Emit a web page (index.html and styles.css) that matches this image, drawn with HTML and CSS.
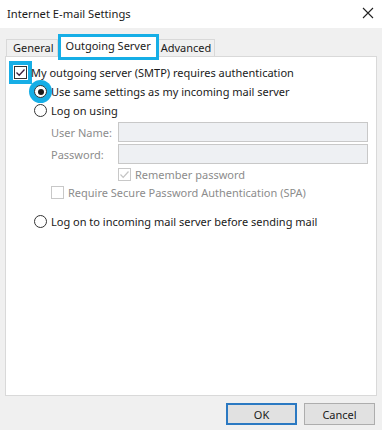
FILE: index.html
```html
<!DOCTYPE html>
<html lang="en">
<head>
    <meta charset="UTF-8">
    <title>Internet E-mail Settings</title>
    <link rel="stylesheet" href="styles.css">
</head>
<body>

<div class="window">
    <div class="titlebar">
        <span class="title">Internet E-mail Settings</span>
        <svg class="close" width="12" height="12" viewBox="0 0 12 12">
            <path d="M1 1 L11 11 M11 1 L1 11" stroke="#222" stroke-width="1.1" fill="none"/>
        </svg>
    </div>

    <div class="content">
        <div class="tabs">
            <div class="tab">General</div>
            <div class="tab selected">Outgoing Server</div>
            <div class="tab">Advanced</div>
        </div>

        <div class="panel">
            <div class="row">
                <span class="check checked focus">
                    <svg width="11" height="11" viewBox="0 0 11 11"><path d="M1.5 5.5 L4.2 8.3 L9.5 2.5" stroke="#3b1f3b" stroke-width="1.3" fill="none"/></svg>
                </span>
                <span>My outgoing server (SMTP) requires authentication</span>
            </div>
            <div class="row indent">
                <span class="radio checked focus"></span>
                <span>Use same settings as my incoming mail server</span>
            </div>
            <div class="row indent">
                <span class="radio"></span>
                <span>Log on using</span>
            </div>

            <div class="field">
                <label>User Name:</label>
                <div class="input"></div>
            </div>
            <div class="field">
                <label>Password:</label>
                <div class="input"></div>
            </div>

            <div class="row sub remember disabled">
                <span class="check">
                    <svg width="11" height="11" viewBox="0 0 11 11"><path d="M1.5 5.5 L4.2 8.3 L9.5 2.5" stroke="#c4c4c4" stroke-width="1.2" fill="none"/></svg>
                </span>
                <span>Remember password</span>
            </div>
            <div class="row sub spa disabled">
                <span class="check"></span>
                <span>Require Secure Password Authentication (SPA)</span>
            </div>

            <div class="row indent last">
                <span class="radio"></span>
                <span>Log on to incoming mail server before sending mail</span>
            </div>
        </div>

        <div class="footer">
            <button class="btn default">OK</button>
            <button class="btn">Cancel</button>
        </div>
    </div>
</div>

</body>
</html>
```

FILE: styles.css
```css
body {
    margin: 0;
    font-family: "Noto Sans", "Open Sans", sans-serif;
    font-size: 11px;
    color: #1a1a1a;
    background-color: #f0f0f0;
}

.window {
    width: 382px;
    height: 430px;
    display: flex;
    flex-direction: column;
}

.titlebar {
    height: 28px;
    background-color: white;
    display: flex;
    align-items: center;
    justify-content: space-between;
    padding: 0 7px 2px 7px;
    box-sizing: border-box;
}

.title {
    font-size: 11.2px;
}

.close {
    margin-right: 1px;
}

.content {
    flex-grow: 1;
    display: flex;
    flex-direction: column;
    padding: 0 5px;
}

.tabs {
    display: flex;
    align-items: flex-end;
    height: 28px;
    padding-left: 1px;
}

.tab {
    height: 16px;
    line-height: 16px;
    padding: 0 3px 0 6px;
    border: 1px solid #d9d9d9;
    border-bottom: none;
    background-color: #f0f0f0;
}

.tab.selected {
    height: 20px;
    line-height: 18px;
    padding: 0 5px;
    margin: 0 3px -1px 3px;
    background-color: white;
    border: none;
    outline: 3px solid #16aee6;
    position: relative;
    z-index: 1;
}

.tab.selected + .tab {
    border-left: none;
    padding-left: 2px;
    padding-right: 3px;
}

.panel {
    height: 340px;
    box-sizing: border-box;
    background-color: white;
    border: 1px solid #d9d9d9;
    padding: 6px 0 0 9px;
}

.row {
    height: 19px;
    display: flex;
    align-items: center;
    gap: 4px;
}

.row.indent {
    padding-left: 19px;
}

.check {
    width: 11px;
    height: 11px;
    border: 1px solid #333;
    background-color: white;
    display: flex;
    align-items: center;
    justify-content: center;
    flex-shrink: 0;
}

.check.focus {
    box-shadow: 0 0 0 1px white, 0 0 0 5px #16aee6;
    margin-left: -1px;
}

.radio {
    width: 11px;
    height: 11px;
    border: 1px solid #333;
    border-radius: 50%;
    background-color: white;
    flex-shrink: 0;
    position: relative;
}

.radio.checked::after {
    content: "";
    position: absolute;
    left: 2.5px;
    top: 2.5px;
    width: 6px;
    height: 6px;
    border-radius: 50%;
    background-color: #1a1a1a;
}

.radio.focus {
    box-shadow: 0 0 0 5px #16aee6;
}

.field {
    display: flex;
    align-items: center;
    height: 20px;
    margin-top: 2px;
    margin-bottom: 1px;
    padding-left: 36px;
}

.field label {
    width: 67px;
    color: #8c8c8c;
}

.input {
    width: 248px;
    height: 18px;
    border: 1px solid #c8c8c8;
    background-color: #eef0f3;
}

.disabled {
    color: #8c8c8c;
}

.disabled .check {
    border-color: #c8c8c8;
}

.row.remember {
    padding-left: 103px;
    margin-top: 1px;
    height: 18px;
}

.row.spa {
    padding-left: 36px;
    height: 18px;
}

.row.last {
    margin-top: 11px;
}

.footer {
    display: flex;
    justify-content: flex-end;
    gap: 7px;
    padding: 7px 2px 0 0;
}

.btn {
    width: 71px;
    height: 22px;
    font-family: inherit;
    font-size: 11px;
    color: #1a1a1a;
    background-color: #e1e1e1;
    border: 1px solid #adadad;
    padding: 0;
}

.btn.default {
    border: 2px solid #2b79c2;
}
```
